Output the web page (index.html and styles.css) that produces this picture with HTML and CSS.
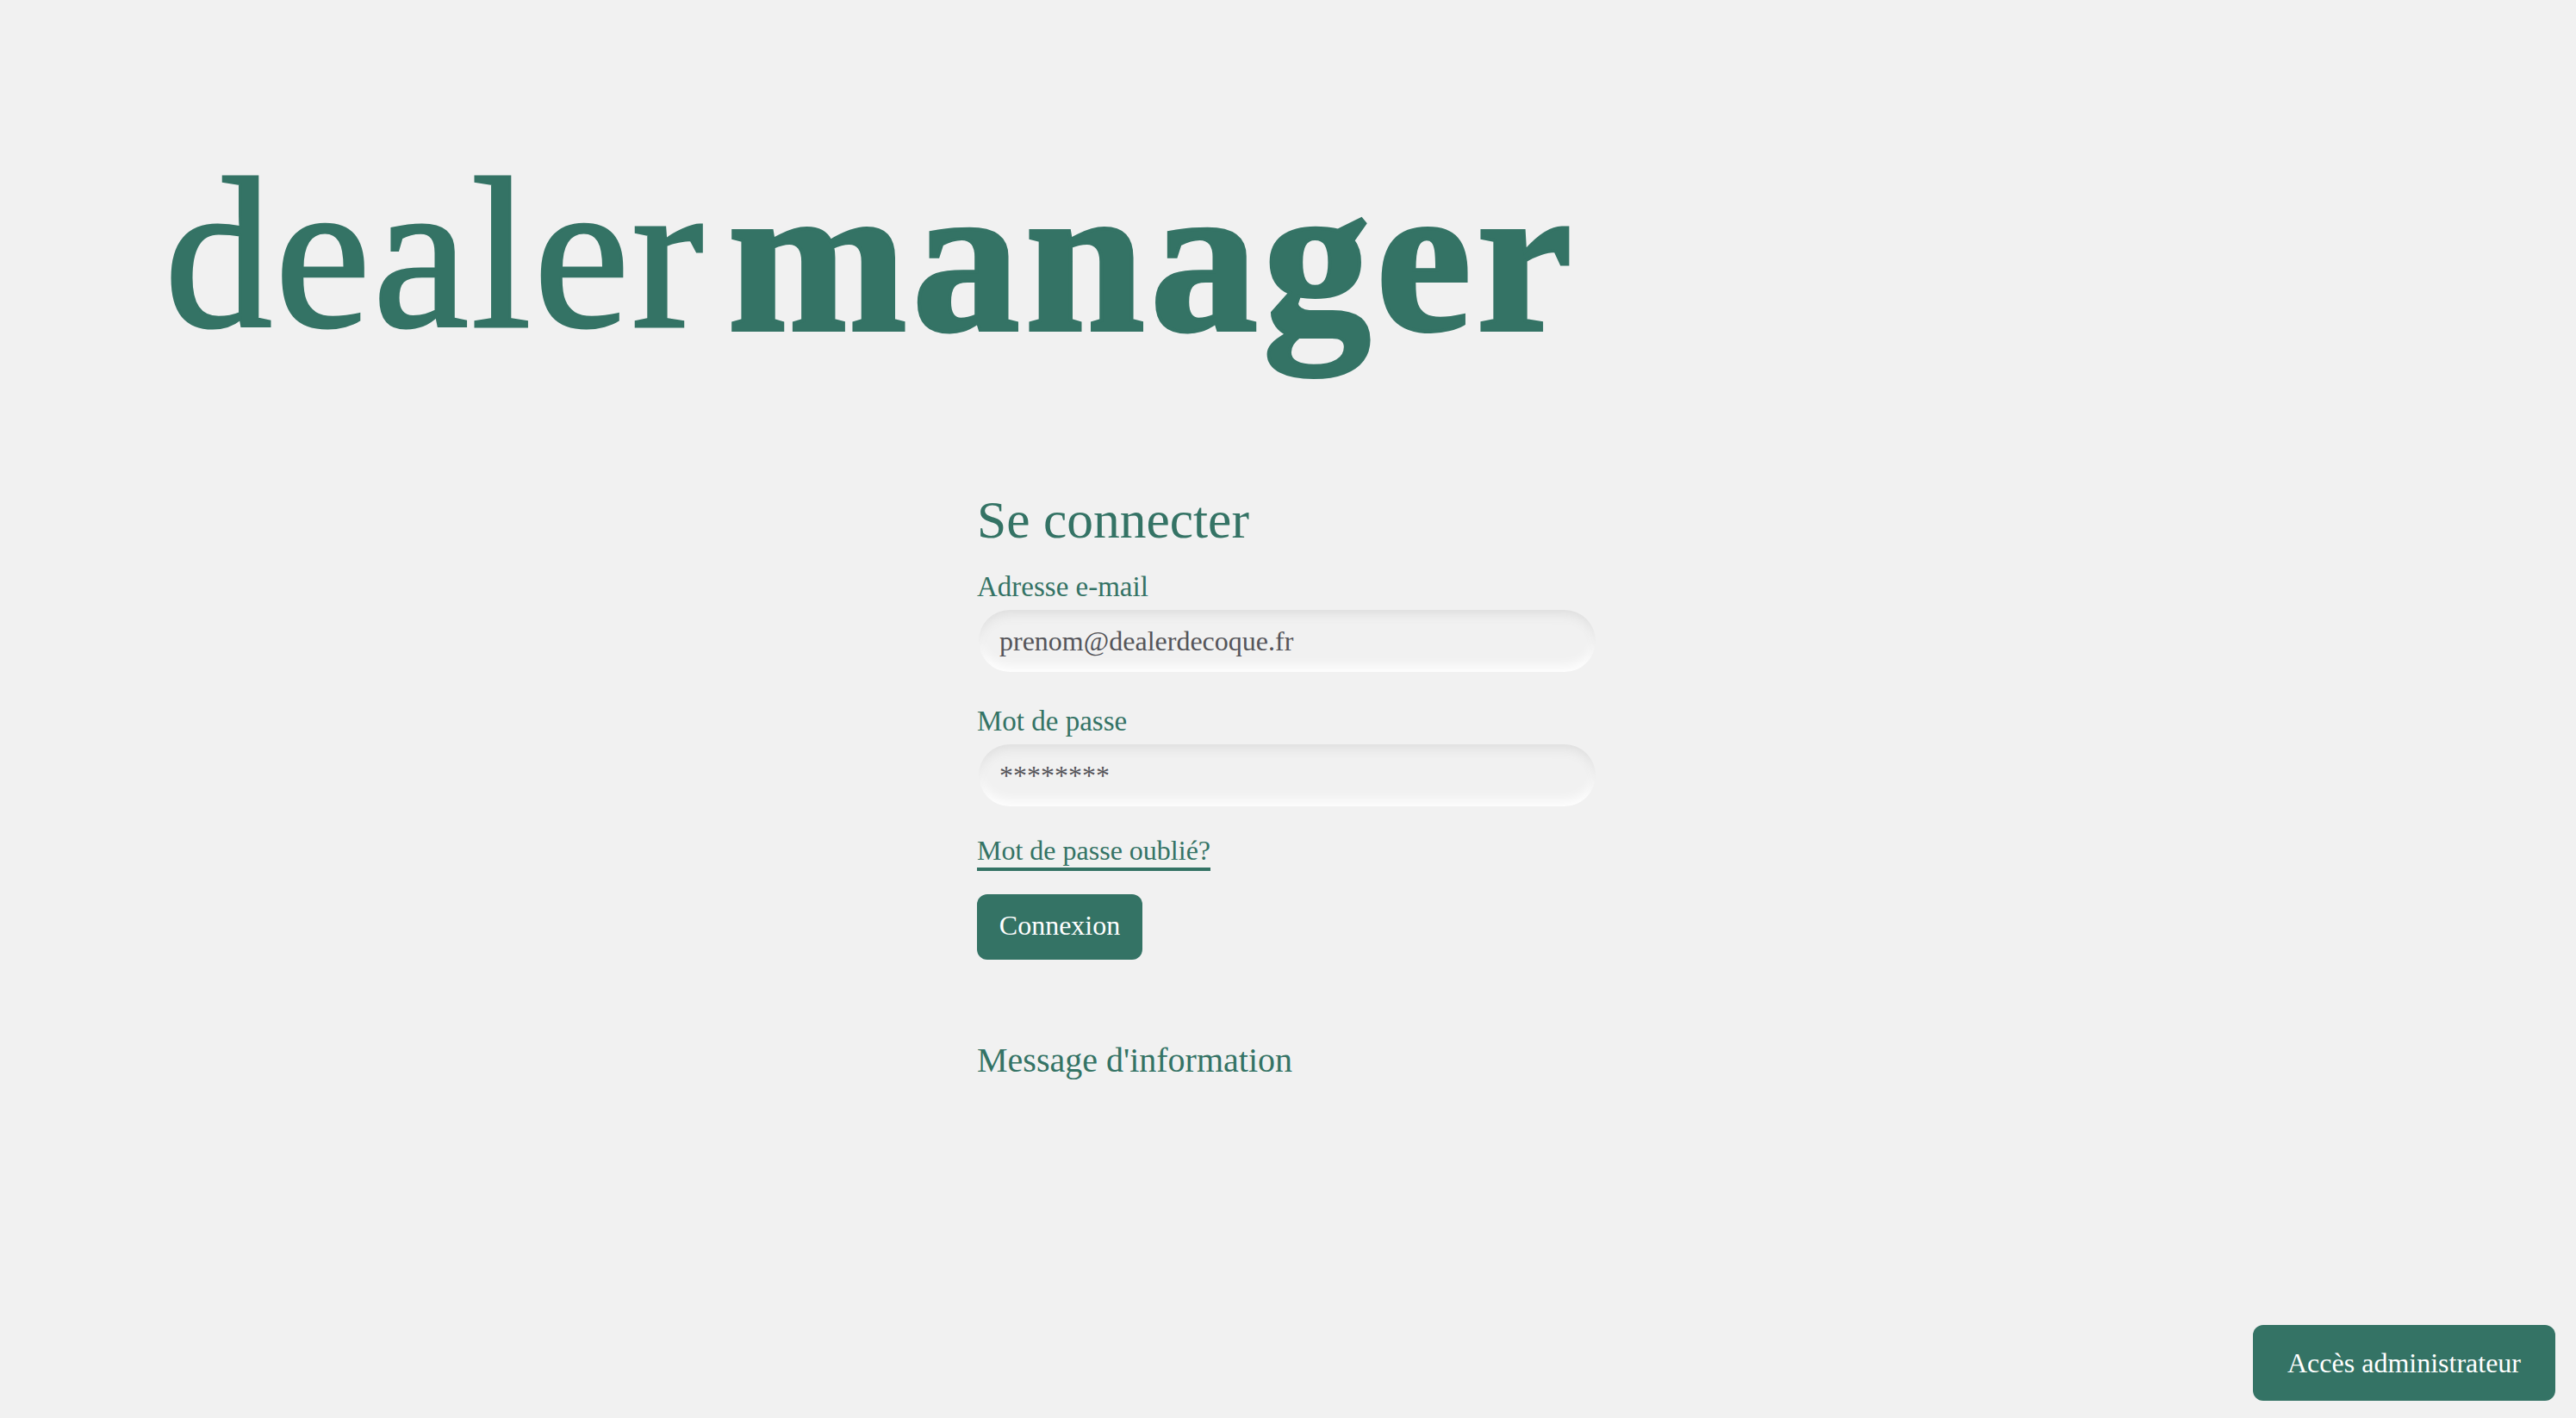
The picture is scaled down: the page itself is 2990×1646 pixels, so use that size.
FILE: index.html
```html
<!DOCTYPE html>
<html lang="fr">
<head>
<meta charset="utf-8">
<title>Dealer Manager</title>
<link rel="stylesheet" href="styles.css">
</head>
<body>
<div class="page">
  <h1 class="logo"><span class="logo-light">dealer</span><span class="logo-bold">manager</span></h1>
  <main class="panel">
    <h2 class="title">Se connecter</h2>
    <form class="form">
      <label class="label" for="email">Adresse e-mail</label>
      <input class="field" id="email" type="text" placeholder="prenom@dealerdecoque.fr">
      <label class="label label-next" for="pass">Mot de passe</label>
      <input class="field" id="pass" type="text" placeholder="********">
      <a class="forgot" href="#">Mot de passe oublié?</a>
      <button class="btn btn-login" type="button">Connexion</button>
    </form>
    <h3 class="info">Message d'information</h3>
  </main>
  <footer class="footer">
    <button class="btn btn-admin" type="button">Accès administrateur</button>
  </footer>
</div>
</body>
</html>
```
FILE: styles.css
```css
html, body {
  margin: 0;
  padding: 0;
  background: #f1f1f1;
}
.page {
  box-sizing: border-box;
  height: 1646px;
  display: flex;
  flex-direction: column;
  align-items: flex-start;
  font-family: "Liberation Serif", "Times New Roman", serif;
  color: #347365;
}
.logo {
  display: flex;
  align-items: flex-start;
  margin: 145px 0 0 191px;
  font-size: 250px;
  line-height: 300px;
  height: 300px;
  color: #347365;
}
.logo-light {
  font-weight: 400;
  letter-spacing: 3px;
  -webkit-text-stroke: 3px #347365;
}
.logo-bold {
  font-weight: 700;
  letter-spacing: 6px;
  margin: 4px 0 0 25px;
  -webkit-text-stroke: 4px #347365;
}
.panel {
  width: 720px;
  margin: 123px 0 0 1134px;
}
.title {
  margin: 0;
  font-size: 61.5px;
  line-height: 70px;
  font-weight: 400;
}
.form {
  display: flex;
  flex-direction: column;
  align-items: flex-start;
}
.label {
  margin: 23px 0 7px;
  font-size: 33px;
  line-height: 40px;
}
.label-next {
  margin-top: 37px;
}
.field {
  box-sizing: border-box;
  width: 716px;
  height: 72px;
  margin: 0 0 0 2px;
  padding: 0 24px;
  border: 0;
  border-radius: 36px;
  outline: 0;
  background: #f1f1f1;
  font: 32px/40px "Liberation Serif", "Times New Roman", serif;
  color: #55555a;
  box-shadow: inset 0 9px 14px -5px #dcdcdc, inset 0 -9px 14px -3px #ffffff;
}
.field::placeholder {
  color: #55555a;
  opacity: 1;
}
.forgot {
  margin-top: 31px;
  font-size: 32px;
  line-height: 40px;
  color: #347365;
  text-decoration: none;
  border-bottom: 4px solid #347365;
}
.btn {
  border: 0;
  background: #347365;
  color: #ffffff;
  font: 32px/40px "Liberation Serif", "Times New Roman", serif;
  border-radius: 12px;
}
.btn-login {
  margin-top: 27px;
  width: 192px;
  height: 76px;
  padding: 0 0 4px;
}
.info {
  margin: 92px 0 0;
  font-size: 40px;
  line-height: 50px;
  font-weight: 400;
}
.footer {
  box-sizing: border-box;
  width: 100%;
  margin-top: auto;
  padding: 0 24px 20px;
  display: flex;
  justify-content: flex-end;
}
.btn-admin {
  width: 351px;
  height: 88px;
  padding: 0;
}
```
